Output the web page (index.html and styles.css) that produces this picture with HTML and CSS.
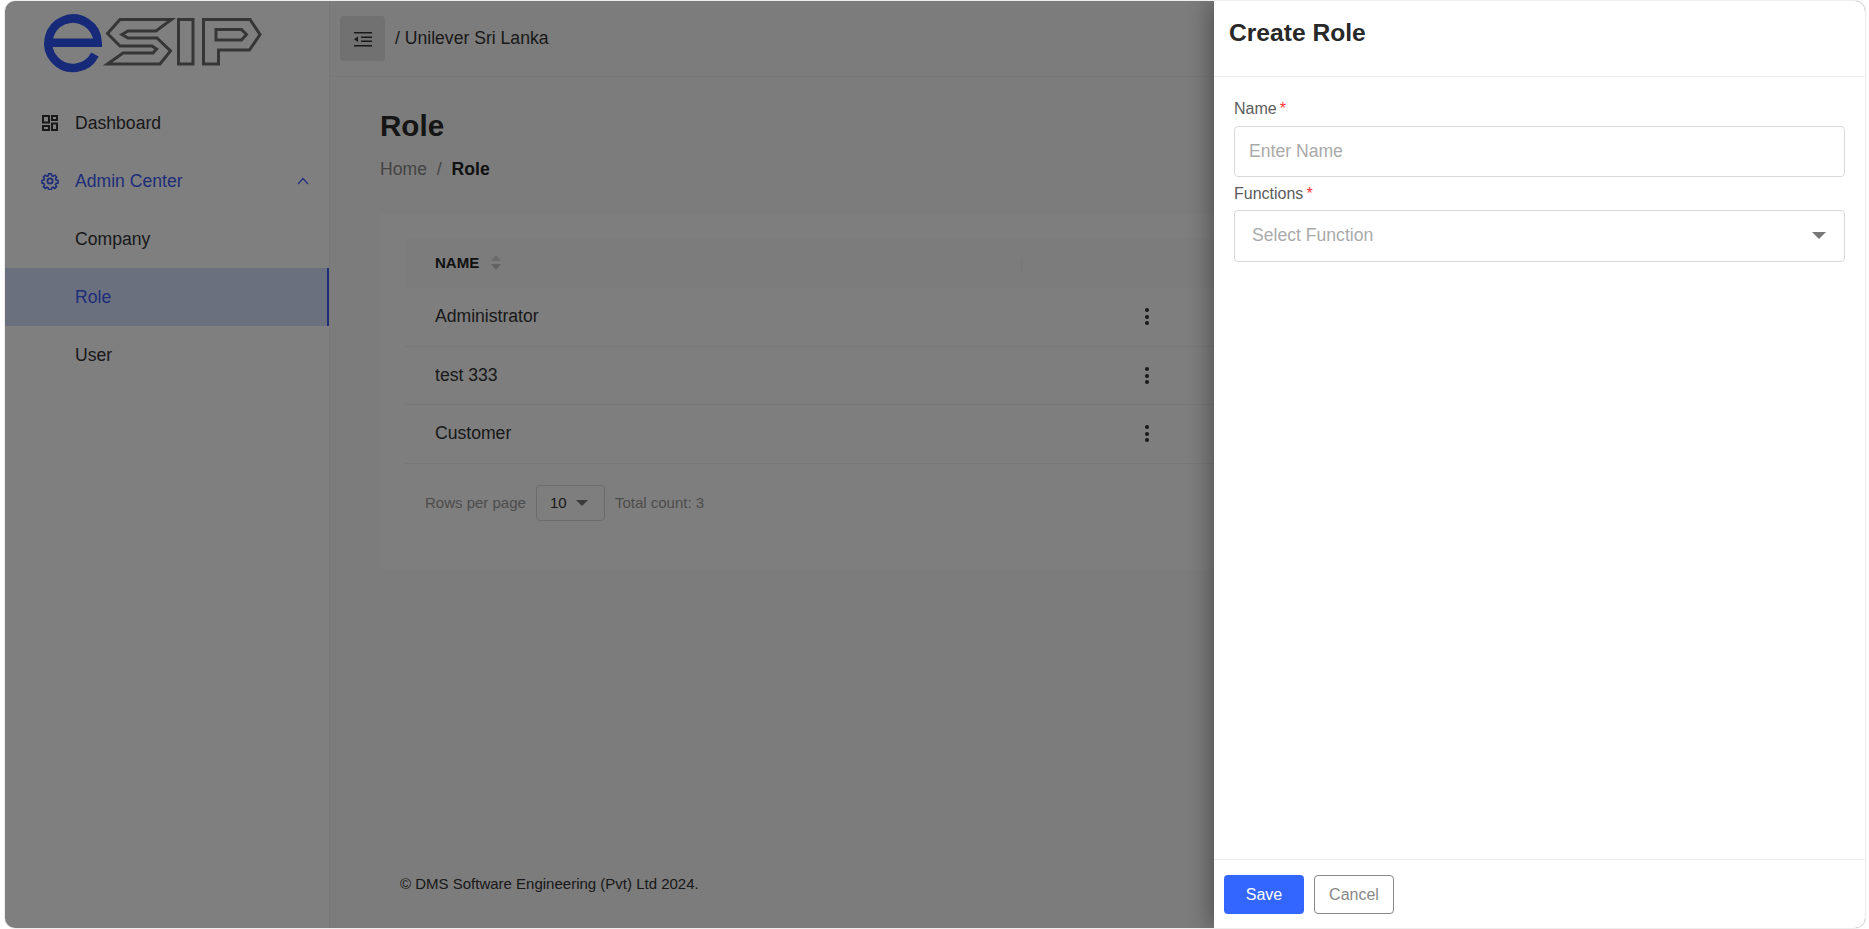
FILE: index.html
```html
<!DOCTYPE html>
<html lang="en">
<head>
    <meta charset="UTF-8">
    <meta name="viewport" content="width=device-width, initial-scale=1.0">
    <title>Role</title>
    <link rel="stylesheet" href="styles.css">
</head>
<body>
    <div class="app">
        <div class="sidebar">
            <div class="logo">
                <svg width="325" height="76" viewBox="5 0 325 76">
                    <path class="logo-e" d="M49 41.700H97.700A24.700 24.700 0 1 0 95 53.500"/>
                    <path class="logo-sip" d="M120 18.500H171.500L156 30H128L122 33.500L128 37H157L170.500 50L160 63H107.500L123 52H153L156.500 48L152 45H120L107.500 32.500Z"/>
                    <path class="logo-sip" d="M178.500 18.500H193V63H178.500Z"/>
                    <path class="logo-sip" d="M203.500 18.500H250L260 33.500L249.500 49H218.500V63H203.500ZM216 28.500V39H241.500L246.500 33.500L241.500 28.500Z"/>
                </svg>
            </div>
            <ul class="menu">
                <li class="menu-item">
                    <svg class="menu-icon" width="18" height="18" viewBox="0 0 18 18">
                        <path d="M2 2H8V8.500H2ZM2 12H8V16H2ZM11 2H16V6H11ZM11 9.500H16V16H11Z"/>
                    </svg>
                    <a href="#">Dashboard</a>
                </li>
                <li class="menu-item open">
                    <svg class="menu-icon gear" width="18" height="18" viewBox="0 0 24 24">
                        <circle cx="12" cy="12" r="3.500"/>
                        <path d="M10 1.500h4l.6 3 2 .9 2.600-1.700 2.800 2.800-1.700 2.600.9 2 3 .6v4l-3 .6-.9 2 1.700 2.600-2.800 2.800-2.600-1.700-2 .9-.6 3h-4l-.6-3-2-.9-2.600 1.700-2.800-2.800 1.700-2.600-.9-2-3-.6v-4l3-.6.9-2-1.700-2.600 2.800-2.800 2.600 1.700 2-.9z" transform="translate(12 12) scale(.88) translate(-12 -12.500)"/>
                    </svg>
                    <a href="#">Admin Center</a>
                    <svg class="menu-arrow" width="12" height="8" viewBox="0 0 12 8">
                        <path d="M1 7L6 1.500L11 7"/>
                    </svg>
                </li>
                <li class="menu-item sub"><a href="#">Company</a></li>
                <li class="menu-item sub active"><a href="#">Role</a></li>
                <li class="menu-item sub"><a href="#">User</a></li>
            </ul>
        </div>

        <div class="main">
            <div class="topbar">
                <div class="toggle">
                    <svg width="18" height="16" viewBox="0 0 18 16">
                        <path d="M0 1H18V2.500H0ZM7 5.500H18V7H7ZM7 9.500H18V11H7ZM0 14H18V15.500H0ZM0 8.200L4 5.500V11Z"/>
                    </svg>
                </div>
                <span class="org">/ Unilever Sri Lanka</span>
            </div>

            <div class="content">
                <h1 class="page-title">Role</h1>
                <div class="crumbs">
                    <span class="crumb-link">Home</span>
                    <span class="crumb-sep">/</span>
                    <b>Role</b>
                </div>

                <div class="card">
                    <table class="table">
                        <thead>
                            <tr>
                                <th class="col-name">
                                    NAME
                                    <span class="sorter"><i class="up"></i><i class="down"></i></span>
                                    <span class="col-line"></span>
                                </th>
                                <th></th>
                            </tr>
                        </thead>
                        <tbody>
                            <tr>
                                <td>Administrator</td>
                                <td><span class="kebab"><i></i><i></i><i></i></span></td>
                            </tr>
                            <tr>
                                <td>test 333</td>
                                <td><span class="kebab"><i></i><i></i><i></i></span></td>
                            </tr>
                            <tr>
                                <td>Customer</td>
                                <td><span class="kebab"><i></i><i></i><i></i></span></td>
                            </tr>
                        </tbody>
                    </table>
                    <div class="pager">
                        <span>Rows per page</span>
                        <div class="page-size">10 <i class="caret"></i></div>
                        <span>Total count: 3</span>
                    </div>
                </div>
            </div>

            <div class="footer">© DMS Software Engineering (Pvt) Ltd 2024.</div>
        </div>

        <!-- backdrop + drawer sit over the page -->
        <div class="backdrop"></div>
        <div class="drawer">
            <div class="drawer-head">Create Role</div>
            <div class="drawer-body">
                <label class="field-label">Name<span class="req">*</span></label>
                <input class="field" type="text" placeholder="Enter Name">
                <label class="field-label second">Functions<span class="req">*</span></label>
                <div class="field select">
                    <span>Select Function</span>
                    <i class="caret"></i>
                </div>
            </div>
            <div class="drawer-foot">
                <button class="btn btn-save">Save</button>
                <button class="btn btn-cancel">Cancel</button>
            </div>
        </div>
    </div>
</body>
</html>
```

FILE: styles.css
```css
* {
    box-sizing: border-box;
}

html, body {
    height: 100%;
}

body {
    margin: 0;
    padding: 1px 4px 1px 5px;
    background-color: #fff;
    font-family: "Liberation Sans", Arial, sans-serif;
    font-size: 17.6px;
    color: #333;
    overflow: hidden;
}

.app {
    position: relative;
    display: flex;
    height: 100%;
    border-radius: 10px;
    overflow: hidden;
    background-color: #f8f8f8;
    box-shadow: 0 0 2px rgba(0, 0, 0, 0.25);
}

/* sidebar */
.sidebar {
    width: 325px;
    flex-shrink: 0;
    background-color: #fff;
    border-right: 1px solid #f0f0f0;
}

.logo {
    height: 76px;
}

.logo svg {
    display: block;
}

.logo-e {
    fill: none;
    stroke: #2f55f5;
    stroke-width: 8.500;
}

.logo-sip {
    fill: none;
    stroke: #6c6c6c;
    stroke-width: 3;
    fill-rule: evenodd;
}

.menu {
    list-style-type: none;
    margin: 17px 0 0;
    padding: 0;
}

.menu-item {
    display: flex;
    align-items: center;
    height: 58px;
    padding-left: 36px;
}

.menu-item a {
    text-decoration: none;
    color: #333;
    margin-left: 16px;
}

.menu-icon {
    fill: none;
    stroke: #333;
    stroke-width: 2;
    flex-shrink: 0;
}

.menu-item.open a {
    color: #3d5bf5;
}

.menu-item.open .menu-icon {
    stroke: #3d5bf5;
}

.menu-icon.gear {
    stroke-width: 2.400;
}

.menu-arrow {
    margin-left: auto;
    margin-right: 20px;
    fill: none;
    stroke: #3d5bf5;
    stroke-width: 1.2;
}

.menu-item.sub {
    padding-left: 54px;
}

.menu-item.sub a {
    margin-left: 16px;
}

.menu-item.active {
    background-color: #d6e0ff;
    border-right: 2px solid #3d5bf5;
}

.menu-item.active a {
    color: #3d5bf5;
}

/* main column */
.main {
    flex-grow: 1;
    min-width: 0;
    display: flex;
    flex-direction: column;
}

.topbar {
    height: 76px;
    flex-shrink: 0;
    display: flex;
    align-items: center;
    padding-left: 10px;
    border-bottom: 1px solid #f0f0f0;
}

.toggle {
    width: 45px;
    height: 45px;
    display: flex;
    align-items: center;
    justify-content: center;
    background-color: #e2e2e2;
    border-radius: 4px;
    margin-right: 10px;
}

.toggle svg {
    fill: #333;
}

.content {
    flex-grow: 1;
    padding: 32px 0 0 50px;
}

.page-title {
    margin: 0;
    font-size: 29.6px;
    line-height: 34px;
    font-weight: bold;
    color: #2a2a2a;
}

.crumbs {
    margin-top: 14px;
    line-height: 24px;
    color: #222;
}

.crumb-link {
    color: #888;
}

.crumb-sep {
    color: #888;
    margin: 0 5px;
}

.card {
    margin-top: 33px;
    height: 355px;
    padding: 25px 0 0 25px;
    background-color: #fdfdfd;
}

.table {
    width: 100%;
    border-collapse: collapse;
    font-size: 17.6px;
}

.table th {
    height: 49px;
    text-align: left;
    background-color: #f8f8f8;
    font-size: 15px;
    color: #222;
    padding: 0 0 2px;
}

.col-name {
    position: relative;
    width: 617px;
    padding-left: 30px !important;
}

.col-line {
    position: absolute;
    right: 0;
    top: 20px;
    width: 1px;
    height: 13px;
    background-color: #eee;
}

.sorter {
    display: inline-block;
    width: 10px;
    height: 15px;
    margin-left: 8px;
    vertical-align: -2px;
    position: relative;
}

.sorter i {
    position: absolute;
    left: 0;
    border-left: 5px solid transparent;
    border-right: 5px solid transparent;
}

.sorter .up {
    top: 0;
    border-bottom: 6px solid #d4d4d4;
}

.sorter .down {
    bottom: 0;
    border-top: 6px solid #c4c4c4;
}

.table td {
    height: 58.400px;
    padding: 0;
    border-bottom: 1px solid #f0f0f0;
}

.table td:first-child {
    padding-left: 30px;
}

.kebab {
    display: flex;
    flex-direction: column;
    gap: 2.500px;
    width: 4px;
    margin-left: 123px;
}

.kebab i {
    display: block;
    width: 4px;
    height: 4px;
    border-radius: 50%;
    background-color: #333;
}

.pager {
    display: flex;
    align-items: center;
    margin-top: 21px;
    padding-left: 20px;
    font-size: 15px;
    color: #999;
}

.page-size {
    display: flex;
    align-items: center;
    width: 69px;
    height: 36px;
    margin: 0 10px 0 10px;
    padding-left: 13px;
    border: 1px solid #d8d8d8;
    border-radius: 4px;
    color: #333;
}

.page-size .caret {
    margin-left: 9px;
    border-left-width: 6px;
    border-right-width: 6px;
    border-top-width: 6px;
}

.caret {
    display: inline-block;
    border-left: 7px solid transparent;
    border-right: 7px solid transparent;
    border-top: 7px solid #777;
}

.footer {
    height: 113px;
    flex-shrink: 0;
    padding: 60px 0 0 70px;
    font-size: 15px;
    color: #333;
}

/* overlay */
.backdrop {
    position: absolute;
    top: 0;
    right: 0;
    bottom: 0;
    left: 0;
    background-color: rgba(0, 0, 0, 0.5);
}

.drawer {
    position: absolute;
    top: 0;
    right: 0;
    bottom: 0;
    width: 651px;
    display: flex;
    flex-direction: column;
    background-color: #fff;
    box-shadow: -6px 0 20px rgba(0, 0, 0, 0.3);
}

.drawer-head {
    height: 76px;
    flex-shrink: 0;
    padding: 18px 0 0 15px;
    font-size: 24.6px;
    font-weight: bold;
    color: #282828;
    border-bottom: 1px solid #eee;
}

.drawer-body {
    flex-grow: 1;
    padding: 23px 20px 0 20px;
}

.field-label {
    display: block;
    height: 26px;
    font-size: 16px;
    color: #5c5c5c;
}

.field-label.second {
    margin-top: 8px;
    height: 25px;
}

.req {
    color: #ff3333;
    margin-left: 3px;
}

.field {
    display: flex;
    align-items: center;
    justify-content: space-between;
    width: 100%;
    height: 51px;
    padding: 0 14px;
    border: 1px solid #d9d9d9;
    border-radius: 4px;
    font-family: inherit;
    font-size: 17.6px;
    outline: none;
}

.field::placeholder {
    color: #aaa;
    opacity: 1;
}

.select {
    height: 52px;
    padding: 0 18px 1px 17px;
    color: #aaa;
}

.drawer-foot {
    height: 69px;
    flex-shrink: 0;
    display: flex;
    gap: 10px;
    padding: 15px 0 0 10px;
    border-top: 1px solid #eee;
}

.btn {
    width: 80px;
    height: 39px;
    border-radius: 4px;
    font-family: inherit;
    font-size: 16px;
}

.btn-save {
    background-color: #3366ff;
    border: none;
    color: #fff;
}

.btn-cancel {
    background-color: #fff;
    border: 1px solid #888;
    color: #888;
}
```
